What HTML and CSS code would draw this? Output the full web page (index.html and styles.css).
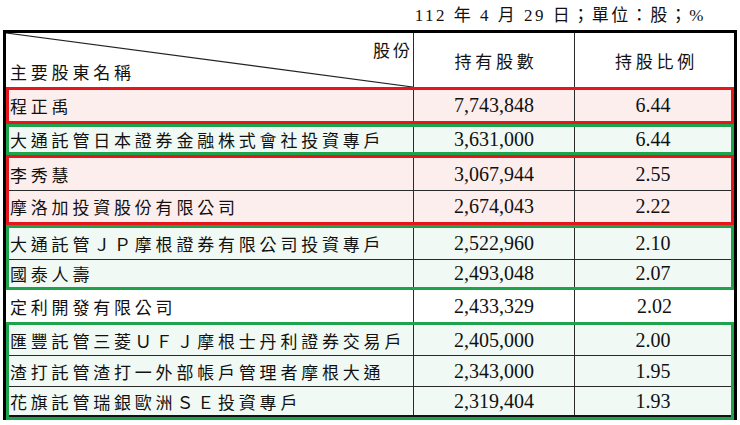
FILE: index.html
```html
<!DOCTYPE html>
<html lang="zh-Hant">
<head>
<meta charset="utf-8">
<title>主要股東</title>
<link rel="stylesheet" href="styles.css">
</head>
<body>
<div class="page">
  <div class="date">112 年 4 月 29 日；單位：股；%</div>
  <div class="table">
    <div class="row head">
      <div class="cell name diag">
        <svg class="diag-line" viewBox="0 0 100 100" preserveAspectRatio="none"><line x1="0" y1="0" x2="100" y2="100" vector-effect="non-scaling-stroke"/></svg>
        <span class="unit">股份</span>
        <span class="title">主要股東名稱</span>
      </div>
      <div class="cell num cjk">持有股數</div>
      <div class="cell num cjk">持股比例</div>
    </div>

    <div class="group red">
      <div class="row h31">
        <div class="cell name">程正禹</div>
        <div class="cell num">7,743,848</div>
        <div class="cell num">6.44</div>
      </div>
    </div>

    <div class="group green">
      <div class="row h25">
        <div class="cell name">大通託管日本證券金融株式會社投資專戶</div>
        <div class="cell num">3,631,000</div>
        <div class="cell num">6.44</div>
      </div>
    </div>

    <div class="group red">
      <div class="row h32">
        <div class="cell name">李秀慧</div>
        <div class="cell num">3,067,944</div>
        <div class="cell num">2.55</div>
      </div>
      <div class="row h32 sep">
        <div class="cell name">摩洛加投資股份有限公司</div>
        <div class="cell num">2,674,043</div>
        <div class="cell num">2.22</div>
      </div>
    </div>

    <div class="group green">
      <div class="row h30">
        <div class="cell name">大通託管ＪＰ摩根證券有限公司投資專戶</div>
        <div class="cell num">2,522,960</div>
        <div class="cell num">2.10</div>
      </div>
      <div class="row h27 sep">
        <div class="cell name">國泰人壽</div>
        <div class="cell num">2,493,048</div>
        <div class="cell num">2.07</div>
      </div>
    </div>

    <div class="row plain h32">
      <div class="cell name">定利開發有限公司</div>
      <div class="cell num">2,433,329</div>
      <div class="cell num">2.02</div>
    </div>

    <div class="group green">
      <div class="row h29">
        <div class="cell name">匯豐託管三菱ＵＦＪ摩根士丹利證券交易戶</div>
        <div class="cell num">2,405,000</div>
        <div class="cell num">2.00</div>
      </div>
      <div class="row h30 sep">
        <div class="cell name">渣打託管渣打一外部帳戶管理者摩根大通</div>
        <div class="cell num">2,343,000</div>
        <div class="cell num">1.95</div>
      </div>
      <div class="row h31 sep last">
        <div class="cell name">花旗託管瑞銀歐洲ＳＥ投資專戶</div>
        <div class="cell num">2,319,404</div>
        <div class="cell num">1.93</div>
      </div>
    </div>
  </div>
</div>
</body>
</html>
```

FILE: styles.css
```css
* { box-sizing: border-box; }

html, body {
  margin: 0;
  padding: 0;
  background: #ffffff;
}

body {
  font-family: "Liberation Serif", "Noto Sans CJK TC", serif;
  color: #111111;
  width: 740px;
  height: 425px;
  overflow: hidden;
}

.page {
  padding-left: 3px;
}

.date {
  height: 30px;
  display: flex;
  align-items: center;
  justify-content: flex-end;
  padding-right: 34px;
  font-size: 17px;
  line-height: 1;
  letter-spacing: 2.5px;
}

.table {
  width: 734px;
  border-top: 3px solid #000;
  border-left: 3px solid #000;
  border-right: 3px solid #000;
}

.row {
  display: grid;
  grid-template-columns: 407px 161px 1fr;
}

.group .row {
  grid-template-columns: 404px 161px 1fr;
}

.group {
  border: 3px solid;
}

.group.red {
  border-color: #e5171d;
  background: #fdeeee;
}

.group.green {
  border-color: #1fa24c;
  background: #f0f9f4;
}

.row.plain {
  background: #ffffff;
}

.row.sep {
  border-top: 1px solid #2a2a2a;
}

.row.last {
  border-bottom: 2px solid #111;
}

.h25 { height: 25px; }
.h27 { height: 28px; }
.h29 { height: 30px; }
.h30 { height: 31px; }
.h31 { height: 31px; }
.h32 { height: 32px; }

.cell {
  display: flex;
  align-items: center;
  overflow: hidden;
  white-space: nowrap;
}

.cell + .cell {
  border-left: 1px solid #2a2a2a;
}

.name {
  font-size: 17px;
  letter-spacing: 3.8px;
  padding-left: 1px;
}

.row.plain .name {
  padding-left: 4px;
}

.num {
  justify-content: center;
  font-size: 20px;
}

.num.cjk {
  font-size: 17px;
  letter-spacing: 3.8px;
  padding-left: 4px;
}

.head {
  height: 54px;
  background: #ffffff;
}

.diag {
  position: relative;
  display: block;
}

.diag-line {
  position: absolute;
  left: 0;
  top: 0;
  width: 100%;
  height: 100%;
}

.diag-line line {
  stroke: #222;
  stroke-width: 1.2;
}

.unit {
  position: absolute;
  right: 0;
  top: 4px;
  font-size: 17px;
  letter-spacing: 3px;
}

.title {
  position: absolute;
  left: 4px;
  bottom: 3px;
  font-size: 17px;
  letter-spacing: 3.8px;
}
```
